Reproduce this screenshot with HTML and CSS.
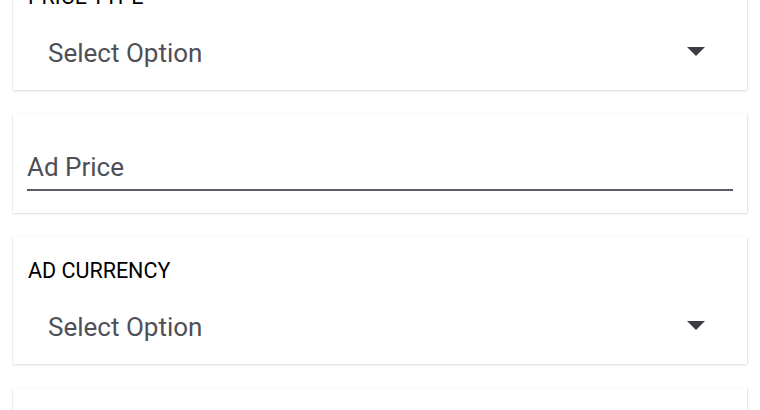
FILE: index.html
```html
<html>
    <head>
        <meta name="viewport" content="width=device-width, initial-scale=1.0">
        <title>Post Ad</title>
        <link rel="stylesheet" href="styles.css">
    </head>
    <body>
        <div class="form">
            <div class="card select-card">
                <p class="label">PRICE TYPE</p>
                <div class="select">
                    <span>Select Option</span>
                    <svg class="arrow" width="18" height="9" viewBox="0 0 18 9"><polygon points="0,0 18,0 9,9"/></svg>
                </div>
            </div>
            <div class="card input-card">
                <input type="text" placeholder="Ad Price" spellcheck="false">
            </div>
            <div class="card select-card">
                <p class="label">AD CURRENCY</p>
                <div class="select">
                    <span>Select Option</span>
                    <svg class="arrow" width="18" height="9" viewBox="0 0 18 9"><polygon points="0,0 18,0 9,9"/></svg>
                </div>
            </div>
            <div class="card empty-card"></div>
        </div>
    </body>
</html>
```

FILE: styles.css
```css
*{
    margin: 0;
    padding: 0;
    box-sizing: border-box;
}
body{
    background-color: #fff;
    font-family: Roboto, "Noto Sans", sans-serif;
    overflow: hidden;
}
.form{
    margin-top: -37px;
}
.card{
    background: #fff;
    margin: 0 13px 24px;
    padding: 0 14px;
    box-shadow: 0 1px 2px rgba(0, 0, 0, 0.14), 1px 0 1px rgba(0, 0, 0, 0.05), -1px 0 1px rgba(0, 0, 0, 0.03);
}
.select-card{
    padding: 22px 14px 14px;
}
.label{
    font-size: 21.5px;
    line-height: 24px;
    color: #000;
    padding-left: 1px;
}
.select{
    margin-top: 20px;
    height: 47px;
    display: flex;
    align-items: center;
    justify-content: space-between;
    padding: 0 28px 0 21px;
    font-size: 26px;
    color: #4f4f58;
}
.arrow{
    fill: #3d3c45;
    margin-top: -2px;
}
.input-card{
    padding: 37px 14px 22px;
}
.input-card input{
    width: 100%;
    border: 0;
    outline: 0;
    border-bottom: 2px solid #5d5c66;
    height: 40px;
    padding: 0 0 6px;
    font-family: Roboto, "Noto Sans", sans-serif;
    font-size: 26px;
    line-height: 32px;
    color: #4f4f58;
    background: transparent;
}
.input-card input::placeholder{
    color: #4f4f58;
}
.empty-card{
    height: 127px;
}
```
